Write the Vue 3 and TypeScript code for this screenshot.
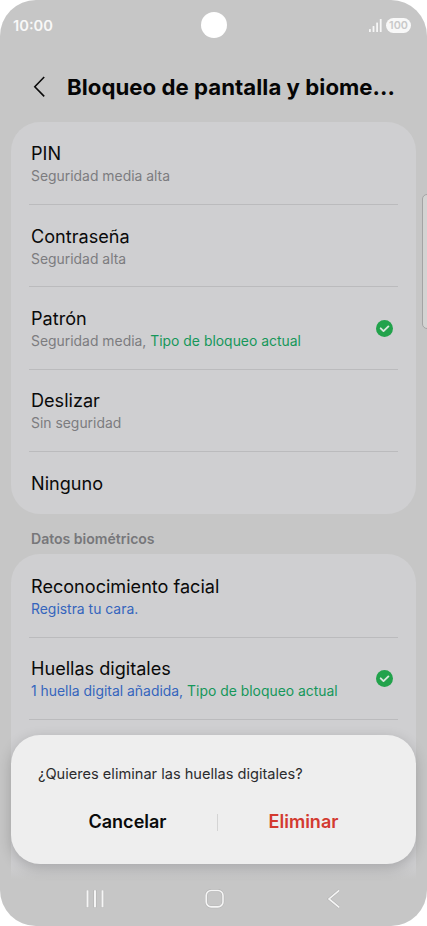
<script setup lang="ts">
interface Note {
  text: string
  tone: 'muted' | 'green' | 'blue'
}
interface Item {
  title: string
  notes: Note[]
  active?: boolean
}

const lockTypes: Item[] = [
  { title: 'PIN', notes: [{ text: 'Seguridad media alta', tone: 'muted' }] },
  { title: 'Contraseña', notes: [{ text: 'Seguridad alta', tone: 'muted' }] },
  {
    title: 'Patrón',
    notes: [
      { text: 'Seguridad media, ', tone: 'muted' },
      { text: 'Tipo de bloqueo actual', tone: 'green' },
    ],
    active: true,
  },
  { title: 'Deslizar', notes: [{ text: 'Sin seguridad', tone: 'muted' }] },
  { title: 'Ninguno', notes: [] },
]

const biometrics: Item[] = [
  { title: 'Reconocimiento facial', notes: [{ text: 'Registra tu cara.', tone: 'blue' }] },
  {
    title: 'Huellas digitales',
    notes: [
      { text: '1 huella digital añadida, ', tone: 'blue' },
      { text: 'Tipo de bloqueo actual', tone: 'green' },
    ],
    active: true,
  },
]

const groups = [
  { heading: '', items: lockTypes },
  { heading: 'Datos biométricos', items: biometrics },
]
const bars = [3, 6, 9.5, 13]
</script>

<template>
  <div class="screen">
    <header class="status">
      <span class="time">10:00</span>
      <span class="camera"></span>
      <span class="indicators">
        <svg class="signal" width="13" height="13" viewBox="0 0 13 13">
          <rect v-for="(h, i) in bars" :key="i" :x="i * 3.6" :y="13 - h" width="1.8" :height="h" rx=".5" fill="#f6f6f6" />
        </svg>
        <span class="battery">100</span>
      </span>
    </header>

    <div class="titlebar">
      <svg class="back" width="12" height="22" viewBox="0 0 12 22">
        <path d="M11.2 1 1.8 10.7l9.4 9.7" fill="none" stroke="#0a0a0a" stroke-width="1.6" />
      </svg>
      <h1>Bloqueo de pantalla y biome...</h1>
    </div>

    <main>
      <template v-for="group in groups" :key="group.heading">
        <h2 v-if="group.heading">{{ group.heading }}</h2>
        <section class="card" :class="{ tall: group.heading }">
          <div v-for="item in group.items" :key="item.title" class="row" :class="{ single: !item.notes.length }">
            <div class="label">
              <div class="name">{{ item.title }}</div>
              <div v-if="item.notes.length" class="notes">
                <span v-for="note in item.notes" :key="note.text" :class="note.tone">{{ note.text }}</span>
              </div>
            </div>
            <svg v-if="item.active" width="17" height="17" viewBox="0 0 17 17">
              <circle cx="8.5" cy="8.5" r="8.5" fill="#22a24b" />
              <path d="m4.7 8.3 2.8 2.8 4.9-4.7" fill="none" stroke="#d8e6dc" stroke-width="1.9" stroke-linecap="round" stroke-linejoin="round" />
            </svg>
          </div>
        </section>
      </template>
    </main>

    <div class="edge"></div>

    <div class="dialog">
      <p>¿Quieres eliminar las huellas digitales?</p>
      <div class="actions">
        <button class="cancel">Cancelar</button>
        <span class="split"></span>
        <button class="remove">Eliminar</button>
      </div>
    </div>

    <nav>
      <svg width="20" height="20" viewBox="0 0 20 20">
        <path d="M2.5 1v17.6M10 1v17.6M17.5 1v17.6" stroke="#b4b4b4" stroke-width="3.2" />
        <path d="M2.5 1.3v17M10 1.3v17M17.5 1.3v17" stroke="#f5f5f5" stroke-width="2" />
      </svg>
      <svg width="20" height="20" viewBox="0 0 20 20">
        <rect x="1.2" y="1.5" width="16.8" height="16.4" rx="5" fill="none" stroke="#b5b5b5" stroke-width="2.8" />
        <rect x="1.2" y="1.5" width="16.8" height="16.4" rx="5" fill="none" stroke="#f5f5f5" stroke-width="1.6" />
      </svg>
      <svg width="20" height="20" viewBox="0 0 20 20">
        <path d="M15.2 1.3 5 9.9l10.2 8.4" fill="none" stroke="#b5b5b5" stroke-width="2.8" />
        <path d="M15.2 1.3 5 9.9l10.2 8.4" fill="none" stroke="#f5f5f5" stroke-width="1.6" />
      </svg>
    </nav>
  </div>
</template>

<style>
body {
  background: #fff;
}
</style>

<style scoped>
.screen {
  position: relative;
  box-sizing: border-box;
  width: 427px;
  height: 926px;
  overflow: hidden;
  border-radius: 36px;
  background: #c6c6c6;
  font-family: Inter, Roboto, sans-serif;
  color: #0a0a0a;
  display: flex;
  flex-direction: column;
}
.status {
  height: 51px;
  flex: none;
  display: grid;
  grid-template-columns: 1fr 26px 1fr;
  align-items: center;
  padding: 0 16px 0 13px;
}
.time {
  font-size: 14.7px;
  font-weight: 600;
  color: #f8f8f8;
}
.camera {
  width: 26px;
  height: 26px;
  margin-left: 1.5px;
  margin-top: -1px;
  border-radius: 50%;
  background: #fff;
}
.indicators {
  display: flex;
  justify-content: flex-end;
  align-items: center;
  gap: 4px;
}
.battery {
  width: 25px;
  height: 15px;
  border-radius: 8px;
  background: #f8f8f8;
  color: #c9c9c9;
  font-size: 10.8px;
  font-weight: 600;
  line-height: 15px;
  text-align: center;
}
.titlebar {
  height: 71.2px;
  flex: none;
  display: flex;
  align-items: center;
  box-sizing: border-box;
  padding: 0 0 0 33px;
}
.back {
  flex: none;
  margin-right: 22px;
}
h1 {
  margin: 0;
  font-size: 22.2px;
  font-weight: 700;
  letter-spacing: 0.04px;
  line-height: 30px;
  white-space: nowrap;
  color: #050505;
}
main {
  flex: none;
  height: 740px;
  padding: 0 11px;
}
h2 {
  margin: 0;
  height: 40.6px;
  box-sizing: border-box;
  padding: 15.4px 20px 0;
  font-size: 14.05px;
  font-weight: 600;
  line-height: 20px;
  color: #77777a;
}
.card {
  padding-top: 0.4px;
  border-radius: 29px;
  background: #cfcfd1;
}
.card.tall {
  padding-top: 0.9px;
  height: 325px;
  border-radius: 29px 29px 0 0;
  background: linear-gradient(#cfcfd1 310px, #c6c6c6 325px);
}
.row {
  height: 82.4px;
  box-sizing: border-box;
  margin: 0 18px;
  padding: 0 5px 0 2px;
  border-bottom: 1px solid #bbbbbd;
  display: flex;
  align-items: center;
  justify-content: space-between;
}
.row.single {
  height: 61.6px;
  border-bottom: 0;
}
.label {
  padding-top: 0.9px;
}
.name {
  font-size: 18.1px;
  line-height: 24px;
}
.notes {
  font-size: 13.92px;
  line-height: 20px;
  white-space: pre;
  padding-top: 1px;
}
.muted {
  color: #7c7c7f;
}
.green {
  color: #16975a;
}
.blue {
  color: #3565bd;
}
.edge {
  position: absolute;
  left: 422px;
  top: 194px;
  width: 12px;
  height: 135px;
  box-sizing: border-box;
  border: 1px solid #a4a4a4;
  border-radius: 5px;
  background: #d3d3d2;
}
.dialog {
  position: absolute;
  left: 11px;
  top: 735px;
  width: 405px;
  height: 129px;
  box-sizing: border-box;
  padding: 29px 27px 0;
  border-radius: 29px;
  background: #eee;
  box-shadow: 0 4px 14px rgba(0, 0, 0, 0.2);
}
.dialog p {
  margin: 0;
  font-size: 14.6px;
  line-height: 21px;
  color: #2b2b2d;
}
.actions {
  display: grid;
  grid-template-columns: 179px 1px 171px;
  align-items: center;
  margin-top: 25px;
}
.actions button {
  border: 0;
  padding: 0;
  background: none;
  font: 600 18.05px/24px Inter, Roboto, sans-serif;
}
.cancel {
  color: #0a0a0a;
}
.remove {
  color: #d33a30;
}
.split {
  width: 1px;
  height: 17px;
  background: #d4d4d4;
}
nav {
  position: absolute;
  left: 0;
  top: 889px;
  width: 427px;
  box-sizing: border-box;
  padding: 0 83px 0 85px;
  display: flex;
  justify-content: space-between;
}
</style>
